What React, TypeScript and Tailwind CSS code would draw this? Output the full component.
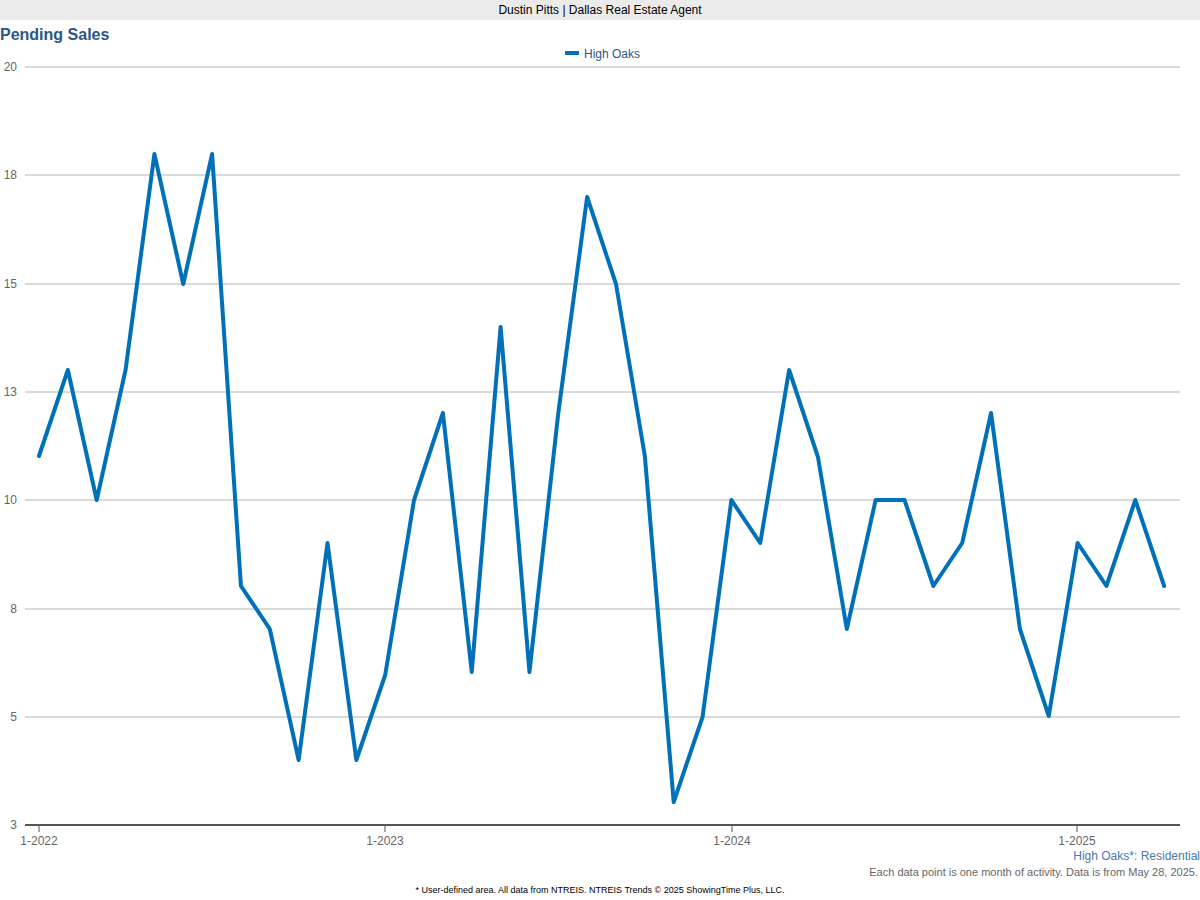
const ys = [456, 370, 500, 370, 154, 284, 154, 586, 629, 760, 543, 760, 675, 500, 413, 672, 327, 672, 413, 197, 284, 456, 802, 717, 500, 543, 370, 457, 629, 500, 500, 586, 543, 413, 629, 716, 543, 586, 500, 586]

const grid = [
  { label: '20', y: 67 },
  { label: '18', y: 175 },
  { label: '15', y: 284 },
  { label: '13', y: 392 },
  { label: '10', y: 500 },
  { label: '8', y: 609 },
  { label: '5', y: 717 },
  { label: '3', y: 825 },
]

const years = [
  { label: '1-2022', x: 39 },
  { label: '1-2023', x: 385 },
  { label: '1-2024', x: 732 },
  { label: '1-2025', x: 1077 },
]

export default function App() {
  const OFF = 20
  const points = ys.map((y, i) => `${39 + i * 28.85},${y - OFF}`).join(' ')

  return (
    <div className="w-[1200px] h-[900px] bg-white flex flex-col" style={{ fontFamily: '"Liberation Sans", Arial, sans-serif' }}>
      <div className="h-5 bg-[#ebebeb] flex items-center justify-center text-[12px] text-black">
        Dustin Pitts | Dallas Real Estate Agent
      </div>
      <svg width="1200" height="828" className="block">
        <text x="0" y="20" fontSize="16" fontWeight="bold" fill="#2b5687">Pending Sales</text>
        <rect x="565" y="31" width="14" height="4" fill="#0071b8" />
        <text x="584" y="38" fontSize="12" fill="#2b5687">High Oaks</text>
        {grid.map(g => (
          <g key={g.label}>
            {g.y !== 825 && <line x1="25" x2="1180" y1={g.y - OFF} y2={g.y - OFF} stroke="#b5b5b5" strokeWidth="1" />}
            <text x="17" y={g.y - OFF + 4} fontSize="12" fill="#666" textAnchor="end">{g.label}</text>
          </g>
        ))}
        <line x1="25" x2="1180" y1={825 - OFF} y2={825 - OFF} stroke="#555" strokeWidth="2" />
        {years.map(y => (
          <g key={y.label}>
            <line x1={y.x} x2={y.x} y1={826 - OFF} y2={832 - OFF} stroke="#555" strokeWidth="1" />
            <text x={y.x} y={845 - OFF} fontSize="12" fill="#666" textAnchor="middle">{y.label}</text>
          </g>
        ))}
        <polyline points={points} fill="none" stroke="#0071b8" strokeWidth="4" strokeLinejoin="round" strokeLinecap="round" />
      </svg>
      <div className="text-right text-[12px] text-[#4a78b0] leading-4">High Oaks*: Residential</div>
      <div className="text-right text-[11px] text-[#666] leading-4 pr-[2px]">Each data point is one month of activity. Data is from May 28, 2025.</div>
      <div className="text-center text-[9px] text-black leading-4 mt-[2px]">* User-defined area. All data from NTREIS. NTREIS Trends © 2025 ShowingTime Plus, LLC.</div>
    </div>
  )
}
